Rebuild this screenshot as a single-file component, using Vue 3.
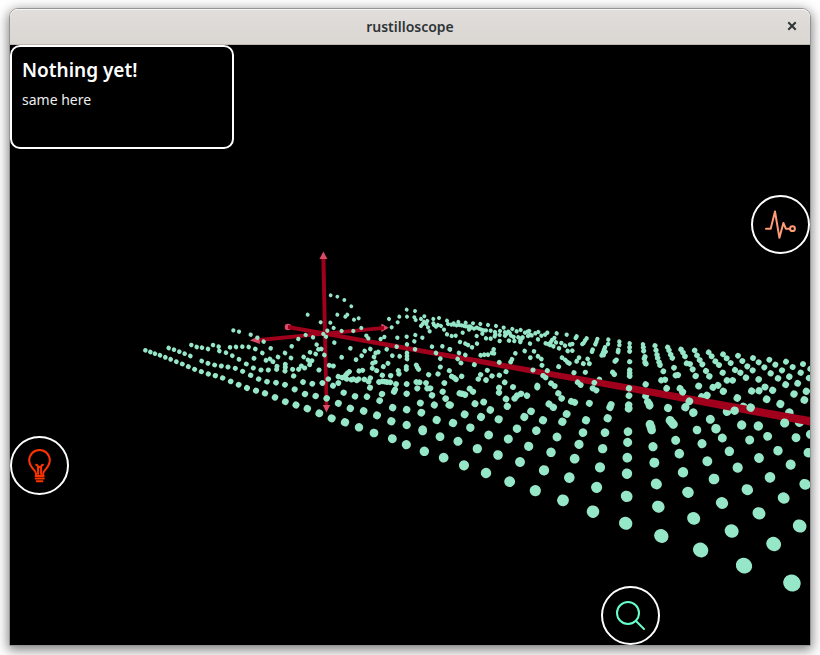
<script setup>
// Point samples, three units per scene pixel, grouped by tile origin.
const tiles = [
  { x: 130, y: 240, data: `
    46,331 61,336 75,341 90,346 106,352 122,358 139,365 157,372 175,380 194,388 214,395 235,402 256,407 278,414 302,424 326,434 351,444 378,452 405,460 435,472 466,485
    116,324 132,329 148,335 164,341 181,348 184,315 200,321 216,323 234,327 249,315 266,320 268,333 288,338 307,347 327,358 349,372 370,384 393,390 415,390 440,388 441,379
    215,363 234,370 254,375 274,378 294,381 316,385 338,394 362,406 386,417 411,425 438,428 465,434
    310,271 327,275 362,284 382,293 401,305 300,322 318,321 337,320 356,321 376,327 422,325 397,339 372,355 408,361 420,357 429,365 444,351 465,339 466,373 465,393 466,382` },
  { x: 290, y: 240, data: `
    53,224 5,319 3,354 8,388 11,408 39,426 67,431 97,429 14,448 45,462 77,468 110,475 18,495 52,506 88,520 125,535 165,547 207,562 252,579 307,596
    122,166 142,170 163,180 184,199 142,224 166,230 172,224 192,239 206,235 92,247 121,248 131,264 214,264 155,273 190,273 112,272 100,282 108,290 25,297 47,285 69,292 133,308 80,314 85,328 94,327 60,337 77,342 103,345 41,351 155,352 181,325 198,359 215,347 224,333 241,327 229,287 235,295 272,297 283,291 290,328 257,339 265,336 252,351 256,366 248,370 247,385 260,392 280,380 294,370 307,347 329,349 351,339 351,348 351,357 349,380 349,388 325,392 327,402 302,407 277,406 351,313 373,304 322,293 350,290 376,285 397,293 320,320 375,328 426,320 457,319 479,328
    305,262 297,237 323,247 328,230 350,209 375,213 351,230 373,232 377,240 393,237 403,229 402,245 412,243 393,258 398,252 409,252 414,262 430,237 447,234 432,255 438,260 444,255 453,258 430,250 471,242 474,252 419,274 462,269 471,283
    54,360 60,365 66,362 59,374 44,384 34,378 26,388 87,390 118,376 130,378 115,417 145,410 145,429 129,437 157,413 167,406 172,400 178,395 170,417 184,419 190,417 200,421 206,417 207,393 218,391 223,418 236,425 241,414 240,443 267,426 277,424 284,425 291,426 301,427 318,432 315,449 312,455 350,432 350,461 379,426 389,427 408,429 382,445 412,445 421,445 379,375 382,382 386,388 416,404 444,402 451,381 478,392 463,429 458,455 426,466 467,476 477,495 433,495 391,489 394,518 350,509 308,503 276,462 269,482 231,470 195,469 161,458 145,490 181,505 221,513 261,526 304,544 350,555 398,569 440,540 438,339 451,356` },
  { x: 450, y: 300, data: `
    11,70 25,66 47,68 69,70 91,72 114,75 138,78 161,83 187,87 212,90 238,93 265,96 292,98 320,100 350,104 380,109 410,115 442,117 475,119 508,125
    4,74 12,74 20,76 28,75 35,76 42,78 48,79 54,80 60,79 64,83 57,89 72,86 80,83 87,86 94,89 101,91 108,91 97,101 122,92 135,96 136,103 134,109 150,93 149,105 149,123 165,97 175,95 179,99 170,101 165,107 183,107 191,111 200,94 205,112 215,115 211,122 218,112 225,98 233,95 234,108 245,106 256,100 240,105 264,118 274,107 285,104 177,122 193,123 211,126 240,131 38,98 5,108 17,107 80,108 108,115 122,116 30,126 46,131 54,135 66,142 81,131 0,148 27,159 46,165 92,166 103,164 114,164 126,159 131,148 132,160 196,160 224,153 252,154 264,169 241,173 274,177 186,178 182,186 73,194 112,211 168,215 276,196 326,200 336,173 346,180 353,187 358,190 380,184 387,173 400,191 413,177 418,191
    287,130 295,132 302,127 300,135 306,120 313,114 318,127 310,139 327,145 334,129 345,137 360,134 367,132 353,153 367,152 377,114 405,122 401,129 397,132 439,126 436,133 428,149 426,155 465,142 462,150 459,158 455,166 461,165 474,132 467,155 508,135 505,150 504,156 499,180 495,184
    488,217 493,223 406,217 372,218 5,229 12,233 18,238 35,229 92,224 85,237 108,240 126,228 148,226 164,247 189,261 147,263 147,278 59,266 69,275 29,280 36,281 45,284 262,257 262,262 303,250 314,258 325,280 335,295 297,312 310,322 364,304 374,307 418,310 392,255 383,247 428,265 439,271 433,248
    23,177 33,189 148,187 249,210 279,227 287,233 292,212
    1,315 75,311 101,306 121,330 172,319 168,297 194,295 201,287 213,281 231,287 44,343 93,351 146,358 9,369 61,383 24,424 116,405 175,417 201,386 223,351 243,334 279,361 259,392 321,411 337,365 350,342 408,361 399,398 387,433 303,457 236,439 82,446 144,465 42,496 108,519 179,545 210,486 282,511 374,476 358,533 458,446 465,398 473,355 480,322 483,314 450,502
    537,265 537,287 536,315 536,326 534,395 533,427 532,473 531,521` },
  { x: 630, y: 320, data: `
    -1,70 -1,82 -1,94 -1,125 -1,150 -1,159 -1,168
    39,73 40,82 41,93 45,110 43,116 45,127 48,132 47,193 53,245 57,251 59,257 60,313 63,321 65,330 69,380 73,428 79,492 85,560
    75,77 78,91 81,104 83,114 87,126 90,135 100,154 94,181 105,179 110,205 114,264 120,301 125,307 130,313 137,361 148,401 159,457 174,517
    113,82 117,91 122,104 127,114 132,143 137,166 144,165 150,205 158,216 166,262 178,244 190,278 201,330 216,371 232,424 252,477 276,549
    153,88 159,98 165,109 170,130 180,132 188,148 197,168 206,198 231,226 241,298 258,326 277,354 298,394 323,443 352,509
    194,91 201,106 209,120 217,133 228,153 238,169 249,202 264,196 280,214 322,234 335,315 359,360 387,414 420,472 461,534
    236,97 245,109 256,124 267,135 278,158 291,181 308,181 365,213 387,212 405,201 410,238 385,318 413,349 444,392 482,434 525,493
    279,103 290,115 302,129 315,150 331,158 348,173 386,178 428,211 451,252 464,309 498,353 535,398
    324,107 337,123 352,139 368,151 314,272 362,263
    369,114 386,127 403,142 422,160 444,175 467,194 492,222 523,240
    418,119 436,134 456,151 478,170 503,190 529,214 468,125 488,141 512,158 537,174 519,132 541,147 541,343` },
  { x: 400, y: 430, data: `19,44 73,64 131,83 68,3 120,20 406,182 489,211 579,245 677,280 680,199 590,172` },
  { x: 610, y: 460, data: `154,228 272,270 402,317 546,369 251,175 365,213 491,252 569,198 447,160` }
]

// Samples that sit behind the long axis.
const hiddenTiles = [
  { x: 450, y: 300, data: '448,238' },
  { x: 630, y: 320, data: '47,228 215,231 478,278 291,275 340,260 508,307' }
]

// Nearer points are lower in the view and larger.
const sizes = [
  [300, 1.9], [330, 2.1], [350, 2.3], [370, 2.5], [385, 2.9], [400, 3.3],
  [412, 3.8], [430, 4.3], [450, 4.7], [490, 5.6], [523, 6.6], [583, 8.6]
]

function radiusAt(y) {
  if (y <= sizes[0][0]) return sizes[0][1]
  for (let i = 1; i < sizes.length; i++) {
    const [y0, r0] = sizes[i - 1]
    const [y1, r1] = sizes[i]
    if (y <= y1) return r0 + ((r1 - r0) * (y - y0)) / (y1 - y0)
  }
  return sizes[sizes.length - 1][1]
}

function toDots(list) {
  return list.flatMap(tile =>
    tile.data.trim().split(/\s+/).map(pair => {
      const [px, py] = pair.split(',').map(Number)
      const x = tile.x + px / 3
      const y = tile.y + py / 3
      // The right-hand side of the plane is closer to the camera.
      const near = y > 345 && y < 430 ? Math.min(0.5, Math.max(0, (x - 600) / 200)) : 0
      const r = radiusAt(y) + near
      const stretch = y > 480 && x > 600 ? 1.04 : 1
      return { x, y, rx: r * stretch, ry: r / stretch, turn: `rotate(30 ${x} ${y})` }
    })
  )
}

const dots = toDots(tiles)
const hiddenDots = toDots(hiddenTiles)
</script>

<template>
  <div class="desktop">
    <main class="window">
      <header class="titlebar">
        <h1 class="title">rustilloscope</h1>
        <button class="close" type="button" aria-label="Close">
          <svg viewBox="0 0 8 8"><path d="M1 1L7 7M7 1L1 7" /></svg>
        </button>
      </header>

      <div class="viewport">
        <svg class="scene" viewBox="10 45 800 600" preserveAspectRatio="xMinYMin slice" aria-hidden="true">
          <g class="dots">
            <ellipse v-for="(d, i) in hiddenDots" :key="i" :cx="d.x" :cy="d.y" :rx="d.rx" :ry="d.ry" :transform="d.turn" />
          </g>
          <path class="tip" d="M388.8 327.7L381.4 323.6V332Z" />
          <circle class="tip" cx="288" cy="327" r="3.3" />
          <path class="axis" d="M259 338L325 331.8L384 326V329.8L325 335.6L259 342Z" />
          <path class="axis" d="M321.4 258.5H325.4L328.3 405.5H324.7Z" />
          <path class="axis" d="M288 324.9L325 331.5L450 353.6L630 384.8L810 417V425.6L630 391.8L450 358.6L325 335.7L288 329.1Z" />
          <path class="tip" d="M323.4 251.6L327.4 259H319.4Z" />
          <path class="tip" d="M326.4 412.6L330.2 405H322.8Z" />
          <path class="tip" d="M250 340.4L259 335.6L260 344Z" />
          <g class="dots">
            <ellipse v-for="(d, i) in dots" :key="i" :cx="d.x" :cy="d.y" :rx="d.rx" :ry="d.ry" :transform="d.turn" />
          </g>
        </svg>

        <section class="card">
          <h2>Nothing yet!</h2>
          <p>same here</p>
        </section>

        <button class="tool pulse" type="button" aria-label="Signal">
          <svg viewBox="2 2 55 55">
            <path d="M15 33.7H19.7L24 16.5L28.4 42.8L32.4 28L34.8 33.7H38.8" />
            <circle cx="41.5" cy="33.7" r="2.4" />
          </svg>
        </button>

        <button class="tool bulb" type="button" aria-label="Light">
          <svg viewBox="2 2 55 55">
            <path d="M26 38.5V37.5C26 34 19.2 31.5 19.2 24.2A10.3 10.3 0 0 1 39.8 24.2C39.8 31.5 33.2 34 33.2 37.5V38.5" />
            <path d="M28.1 38V31.5Q28.1 29.3 26.2 28.8M31.1 38V31.5Q31.1 29.3 33 28.8M28.1 31H31.1" />
            <path d="M25.6 40H33.8M25.6 42.4H33.8M26.8 45.3H32.4" />
          </svg>
        </button>

        <button class="tool search" type="button" aria-label="Search">
          <svg viewBox="2 2 55 55">
            <circle cx="27" cy="27" r="11" />
            <path d="M35 35L43 43" />
          </svg>
        </button>
      </div>
    </main>
  </div>
</template>

<style>
body {
  background: #fff;
}
</style>

<style scoped>
.desktop {
  box-sizing: border-box;
  display: flex;
  min-height: 100vh;
  padding: 8px 9px 9px;
  overflow: hidden;
  font-family: "Noto Sans", "Open Sans", sans-serif;
}
.window {
  flex: 1;
  display: flex;
  flex-direction: column;
  border: 1px solid #949494;
  border-radius: 9px 9px 0 0;
  box-shadow: 0 3px 12px 1px rgba(0, 0, 0, 0.5);
  overflow: hidden;
}
.titlebar {
  box-sizing: border-box;
  display: grid;
  grid-template-columns: 36px 1fr 36px;
  align-items: center;
  height: 36px;
  border-bottom: 1px solid #bfb8b1;
  box-shadow: inset 0 1px #f7f6f5;
  border-radius: 8px 8px 0 0;
  background: linear-gradient(#e1dedb, #dad6d2);
}
.title {
  grid-column: 2;
  margin: 0;
  text-align: center;
  font-size: 14px;
  line-height: 20px;
  font-weight: 600;
  color: #2e3436;
}
.close {
  display: grid;
  place-items: center;
  height: 32px;
  padding: 0 0 2px;
  border: 0;
  background: none;
}
.close svg {
  width: 8px;
  height: 8px;
  overflow: visible;
  stroke: #2e3436;
  stroke-width: 2;
  stroke-linecap: square;
}
.viewport {
  flex: 1;
  position: relative;
  display: flex;
  align-items: flex-start;
  background: #000;
  overflow: hidden;
}
.scene {
  position: absolute;
  inset: 0;
  width: 100%;
  height: 100%;
}
.dots {
  fill: #96e6c8;
}
.axis {
  fill: #a0001c;
}
.tip {
  fill: #dc4a66;
}
.card {
  position: relative;
  box-sizing: border-box;
  width: 224px;
  min-height: 104px;
  padding: 9px 10px;
  border: 2px solid #fff;
  border-radius: 10px;
  background: #000;
  color: #fff;
}
.card h2 {
  margin: 0;
  font-size: 19px;
  line-height: 28px;
  font-weight: 600;
}
.card p {
  margin: 5px 0 0;
  font-size: 14px;
  line-height: 22px;
  color: #eee;
}
.tool {
  position: absolute;
  box-sizing: border-box;
  width: 59px;
  height: 59px;
  padding: 0;
  border: 2px solid #fff;
  border-radius: 50%;
  background: #000;
}
.tool svg {
  display: block;
  width: 100%;
  height: 100%;
  fill: none;
  stroke: currentColor;
  stroke-width: 2;
  stroke-linecap: round;
  stroke-linejoin: round;
}
.pulse {
  top: 25%;
  right: 0;
  color: #ff9a76;
}
.bulb {
  bottom: 25%;
  left: 0;
  color: #ff3300;
}
.search {
  right: 150px;
  bottom: 0;
  color: #66ffcc;
}
</style>
